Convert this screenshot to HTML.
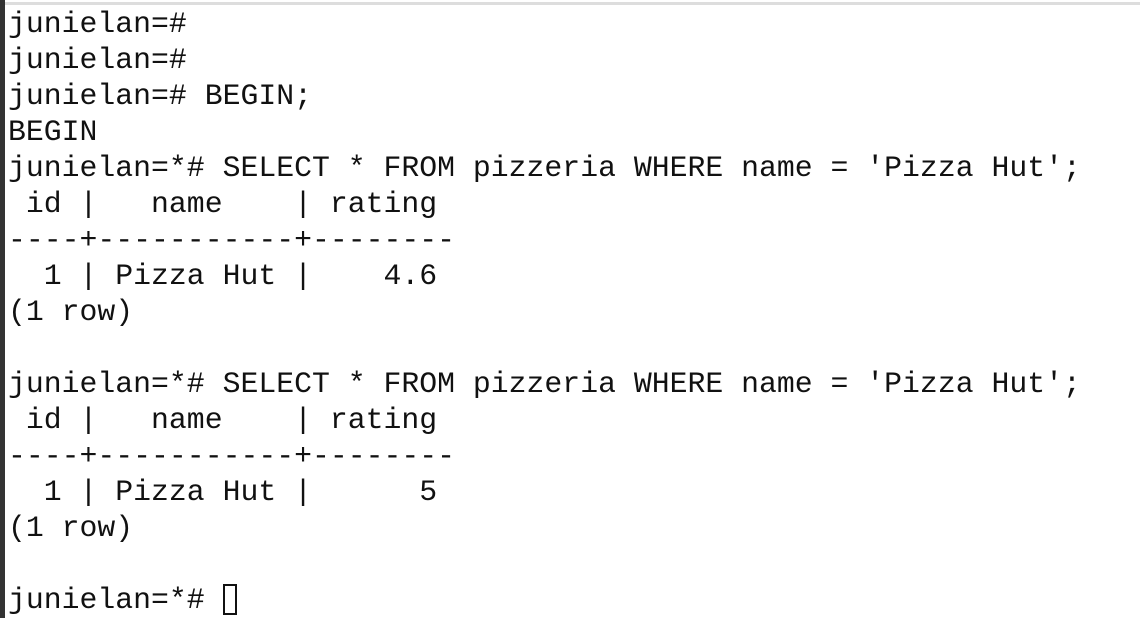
<!DOCTYPE html>
<html><head><style>
html,body{margin:0;padding:0;background:#fff;width:1140px;height:618px;overflow:hidden}
.bar{position:absolute;left:0;top:0;width:5px;height:618px;background:#333}
.top{position:absolute;left:0;top:2px;width:1140px;height:3px;background:#ddd}
pre{position:absolute;left:8px;top:6px;margin:0;font-family:"Liberation Mono",monospace;font-size:29.8px;line-height:36px;color:#111}
.cur{display:inline-block;width:14px;height:31px;border:2px solid #111;vertical-align:-7px;box-sizing:border-box}
</style></head><body>
<div class="top"></div><div class="bar"></div>
<pre>junielan=#
junielan=#
junielan=# BEGIN;
BEGIN
junielan=*# SELECT * FROM pizzeria WHERE name = 'Pizza Hut';
 id |   name    | rating
----+-----------+--------
  1 | Pizza Hut |    4.6
(1 row)

junielan=*# SELECT * FROM pizzeria WHERE name = 'Pizza Hut';
 id |   name    | rating
----+-----------+--------
  1 | Pizza Hut |      5
(1 row)

junielan=*# <span class="cur"></span></pre>
</body></html>
